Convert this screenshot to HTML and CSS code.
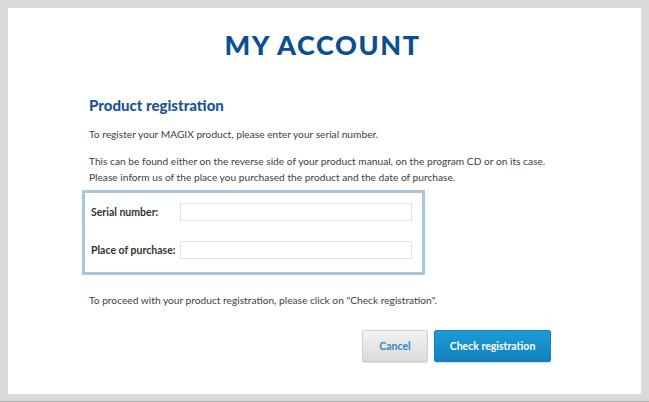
FILE: index.html
```html
<!DOCTYPE html>
<html>
<head>
<meta charset="utf-8">
<link rel="stylesheet" href="styles.css">
</head>
<body>
<div class="frame">
  <div class="panel">
    <h1 class="title">MY ACCOUNT</h1>
    <div class="content">
      <h2 class="heading">Product registration</h2>
      <p class="text first">To register your MAGIX product, please enter your serial number.</p>
      <p class="text second">This can be found either on the reverse side of your product manual, on the program CD or on its case.<br>Please inform us of the place you purchased the product and the date of purchase.</p>
      <div class="formbox">
        <div class="row">
          <label class="label">Serial number:</label>
          <input class="field" type="text">
        </div>
        <div class="row row2">
          <label class="label">Place of purchase:</label>
          <input class="field" type="text">
        </div>
      </div>
      <p class="text proceed">To proceed with your product registration, please click on "Check registration".</p>
      <div class="actions">
        <button class="btn cancel">Cancel</button>
        <button class="btn check">Check registration</button>
      </div>
    </div>
  </div>
</div>
</body>
</html>
```

FILE: styles.css
```css
* { box-sizing: border-box; }
html, body { margin: 0; padding: 0; }
body {
  background: #dadada;
  font-family: Lato, "Liberation Sans", Arial, sans-serif;
  color: #444;
}
.frame {
  width: 649px;
  height: 402px;
  padding: 8px 0 0 8px;
  border-bottom: 1px solid #ababab;
}
.panel {
  width: 633px;
  height: 386px;
  background: #fff;
  padding-top: 21px;
}
.title {
  margin: 0;
  text-align: center;
  font-size: 27px;
  line-height: 32px;
  letter-spacing: 1.6px;
  font-weight: 900;
  color: #0b4f90;
  padding-right: 4px;
}
.content {
  padding-left: 81px;
  width: 560px;
}
.heading {
  margin: 35px 0 0 0;
  font-size: 15px;
  line-height: 18px;
  font-weight: 900;
  color: #1a5596;
}
.text {
  margin: 0;
  font-size: 10.2px;
  line-height: 16px;
  color: #3e3e3e;
  white-space: nowrap;
}
.first { margin-top: 12px; }
.second { margin-top: 11px; }
.formbox {
  margin: 5px 0 0 -7px;
  width: 343px;
  border: 3px solid #a8c6e0;
  padding: 10px 10px 13px 6px;
}
.row {
  display: flex;
  align-items: center;
  height: 18px;
}
.row2 { margin-top: 20px; }
.label {
  width: 89px;
  font-size: 10.5px;
  font-weight: bold;
  color: #333;
  white-space: nowrap;
}
.field {
  width: 232px;
  height: 18px;
  border: 1px solid #e2e2e2;
  margin: 0;
  padding: 0;
  background: #fff;
}
.proceed { margin-top: 17px; }
.actions {
  margin-top: 22px;
  display: flex;
  justify-content: flex-end;
  gap: 6px;
  width: 462px;
}
.btn {
  height: 32px;
  border-radius: 2px;
  font-family: Lato, "Liberation Sans", Arial, sans-serif;
  font-size: 10.5px;
  font-weight: bold;
  padding: 0;
}
.cancel {
  width: 66px;
  color: #2a86c6;
  background: linear-gradient(#f3f3f3, #dadada);
  border: 1px solid #d0d0d0;
  box-shadow: 0 1px 1px rgba(0,0,0,0.15);
}
.check {
  width: 117px;
  color: #fff;
  background: linear-gradient(#1e9bd7, #1181bd);
  border: 1px solid #1580bb;
  box-shadow: 0 1px 1px rgba(0,0,0,0.15);
}
```
